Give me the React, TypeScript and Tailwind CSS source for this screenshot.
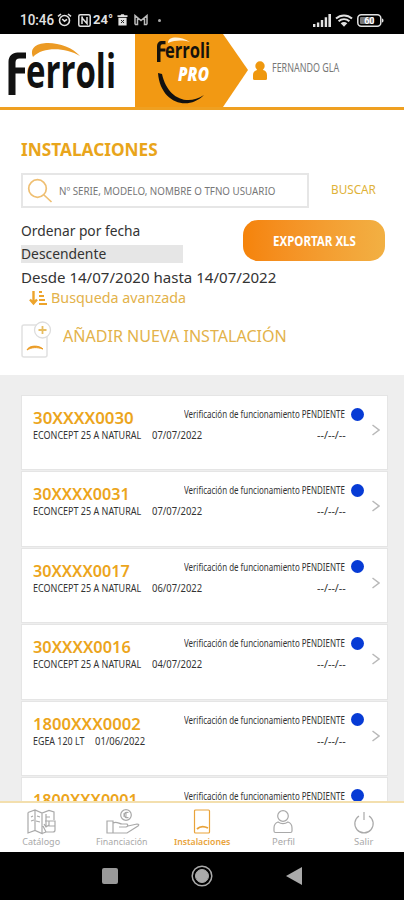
import { useLayoutEffect, useRef, useState, type ReactNode } from "react";
import { clsx } from "clsx";

// Condensed label: squeezes its text to the width of the box
const Fit = ({ className, children }: { className: string; children: ReactNode }) => {
  const box = useRef<HTMLSpanElement>(null);
  const text = useRef<HTMLSpanElement>(null);
  const [scale, setScale] = useState(1);

  useLayoutEffect(() => {
    if (box.current && text.current) {
      setScale(box.current.offsetWidth / text.current.offsetWidth);
    }
  }, [children]);

  return (
    <span ref={box} className={clsx("block shrink-0 whitespace-nowrap", className)}>
      <span ref={text} className="inline-block origin-left" style={{ transform: `scaleX(${scale})` }}>
        {children}
      </span>
    </span>
  );
};

type Installation = {
  id: string;
  idWidth: string;
  model?: string;
  modelWidth?: string;
  date?: string;
};

const installations: Installation[] = [
  { id: "30XXXX0030", idWidth: "w-[101px]", model: "ECONCEPT 25 A NATURAL", modelWidth: "w-[108px]", date: "07/07/2022" },
  { id: "30XXXX0031", idWidth: "w-[97px]", model: "ECONCEPT 25 A NATURAL", modelWidth: "w-[108px]", date: "07/07/2022" },
  { id: "30XXXX0017", idWidth: "w-[97px]", model: "ECONCEPT 25 A NATURAL", modelWidth: "w-[108px]", date: "06/07/2022" },
  { id: "30XXXX0016", idWidth: "w-[98px]", model: "ECONCEPT 25 A NATURAL", modelWidth: "w-[108px]", date: "04/07/2022" },
  { id: "1800XXX0002", idWidth: "w-[108px]", model: "EGEA 120 LT", modelWidth: "w-[51px]", date: "01/06/2022" },
  { id: "1800XXX0001", idWidth: "w-[105px]" },
];

const StatusBar = () => (
  <div className="flex h-[34px] shrink-0 items-center bg-black pl-5 pr-[20px] pt-1.5 font-['Roboto',sans-serif] text-[#e2e2e2]">
    <Fit className="w-[34px] text-[15px] font-medium leading-4">10:46</Fit>
    <svg className="ml-[3px] shrink-0" width="15" height="14" viewBox="0 0 15 14" fill="none" stroke="currentColor" strokeWidth="1.6">
      <circle cx="7.5" cy="7.5" r="5" />
      <path d="M1 3.4 4 1M14 3.4 11 1M5.2 6l2.3 2.2L10 6.4" />
    </svg>
    <svg className="ml-[6px] shrink-0" width="13" height="13" viewBox="0 0 13 13" fill="none" stroke="currentColor" strokeWidth="1.5">
      <rect x=".8" y=".8" width="11.4" height="11.4" rx="1.5" />
      <path d="M4 10V4l5 5.5V3M4 3.2h1" />
    </svg>
    <Fit className="ml-[2px] w-[20px] text-[13px] font-bold leading-4">24°</Fit>
    <svg className="ml-[4px] shrink-0" width="11" height="12" viewBox="0 0 11 12">
      <path d="M.5 1.2h3L4.2.2h2.6l.7 1h3v1.7H.5zM1.4 3.7h8.2V11.5H1.4z" fill="currentColor" />
      <path d="m4 6 3 3M7 6 4 9" stroke="#222" />
    </svg>
    <svg className="ml-[6px] shrink-0" width="14" height="12" viewBox="0 0 14 12" fill="none" stroke="#bbb" strokeWidth="1.5">
      <path d="M1 10.5v-9l6 5 6-5v9M1 10.5h2.500v-6M13 10.500h-2.500v-6" />
    </svg>
    <span className="ml-[10px] size-[3px] shrink-0 rounded-full bg-[#aaa]" />
    <svg className="ml-auto shrink-0" width="18" height="13" viewBox="0 0 18 13" fill="currentColor">
      <path d="M0 10h2.4v3H0zM3.9 8.5h2.4V13H3.9zM7.8 6h2.4v7H7.8zM11.7 3.3h2.4V13h-2.4zM15.4 0h2.6v13h-2.6z" />
    </svg>
    <svg className="ml-[4px] shrink-0" width="18" height="13" viewBox="0 0 18 13" fill="none" stroke="currentColor" strokeWidth="2">
      <path d="M1 4.600c4.700-4.300 11.300-4.300 16 0M3.600 7.300c3.200-2.900 7.600-2.900 10.800 0" />
      <path d="M5.700 9.300c2-1.700 4.600-1.700 6.600 0L9 12.800z" fill="currentColor" stroke="none" />
    </svg>
    <svg className="ml-[4px] shrink-0" width="27" height="13" viewBox="0 0 27 13">
      <rect x=".8" y=".8" width="23" height="11.4" rx="3.5" fill="none" stroke="currentColor" strokeWidth="1.5" />
      <rect x="3" y="3" width="14" height="7" rx="1" fill="#777" />
      <path d="M25 4.500c2 .5 2 3.500 0 4z" fill="currentColor" />
      <text x="12.3" y="9.8" textAnchor="middle" fontSize="9" fontWeight="700" fill="#fff">60</text>
    </svg>
  </div>
);

const Header = () => (
  <header className="flex h-[76px] shrink-0 border-b-[3px] border-[#efa021] bg-white">
    <svg className="shrink-0" width="248" height="73" viewBox="0 0 248 73" fontFamily="'Open Sans', sans-serif" fontWeight="700">
      <path d="M135 0h88l25 36-25 37h-88z" fill="#f29913" />
      <path d="M8.500 61V28c0-6 4-9.500 9-9.500h8.500v6h-6.500q-4 0-4 4v5h9.500v6h-9.500V61z" fill="#111" />
      <text x="26" y="53.5" fontSize="46" textLength="90" lengthAdjust="spacingAndGlyphs" fill="#111">erroli</text>
      <path d="M33 23C29 13 38 9 48 9c12 0 25 5 32 13C66 14 44 12 33 23z" fill="#ec9b25" />
      <path d="M157 28V12c0-3 2-5 4.500-5h4v3.200h-3q-2 0-2 2v2.300h5v3h-5V28z" fill="#15120c" />
      <text x="165" y="24" fontSize="22" textLength="45" lengthAdjust="spacingAndGlyphs" fill="#15120c">erroli</text>
      <path d="M168 9c0-7 12-7 22-1-8-2-14-2-22 1z" fill="#fff3dc" />
      <text x="178" y="47" fontSize="19" fontStyle="italic" fontWeight="800" textLength="31" lengthAdjust="spacingAndGlyphs" fill="#fff">PRO</text>
      <path d="M158 39c2 29 29 39 46 22-18 12-37 2-42-21z" fill="#111" />
    </svg>
    <div className="flex h-[68px] items-center pl-[5px]">
      <svg className="mt-[5px]" width="14" height="20" viewBox="0 0 14 20" fill="#ef980f">
        <circle cx="7" cy="5" r="4.7" />
        <path d="M0 17.500V14c0-3 2-4.500 4-5h6c2 .5 4 2 4 5v3.500q0 1.500-1.500 1.500h-11Q0 19 0 17.500z" />
      </svg>
      <Fit className="ml-[5px] w-[67px] text-[12px] text-[#777]">FERNANDO GLA</Fit>
    </div>
  </header>
);

const Filters = () => (
  <section className="h-[265px] shrink-0 pl-[21px] pr-[19px] pt-[29px] text-[#333]">
    <Fit className="w-[137px] text-[18px] font-bold leading-5 text-[#e9a51b]">INSTALACIONES</Fit>
    <div className="mt-[14px] flex items-center">
      <div className="flex h-[35px] w-[288px] items-center border-2 border-[#e6e6e6] pl-1">
        <svg width="26" height="26" viewBox="0 0 26 26" fill="none" stroke="#efbf72" strokeWidth="1.7">
          <circle cx="10.5" cy="10.5" r="8.8" />
          <path d="m17 17 7.500 7" />
        </svg>
        <Fit className="ml-[6px] w-[216px] text-[11px] leading-4 text-[#777]">Nº SERIE, MODELO, NOMBRE O TFNO USUARIO</Fit>
      </div>
      <Fit className="mb-[2px] ml-[22px] w-[45px] text-[12px] leading-4 text-[#dfb238]">BUSCAR</Fit>
    </div>
    <div className="flex h-[60px] justify-between">
      <div className="pt-[12px]">
        <Fit className="w-[119px] text-[14px] leading-[22px]">Ordenar por fecha</Fit>
        <div className="mt-[3px] h-[18px] w-[162px] bg-[#e6e6e6]">
          <Fit className="w-[85px] text-[14px] leading-[18px]">Descendente</Fit>
        </div>
      </div>
      <button className="mt-[12px] flex h-[41px] w-[142px] items-center justify-center rounded-[15px] bg-linear-to-r from-[#f58309] to-[#f2b043] text-[15px] font-bold text-white">
        <Fit className="w-[83px]">EXPORTAR XLS</Fit>
      </button>
    </div>
    <Fit className="w-[255px] text-[14px] leading-[20px]">Desde 14/07/2020 hasta 14/07/2022</Fit>
    <div className="flex h-[20px] items-center pl-[8px] text-[#e3b24a]">
      <svg width="19" height="16" viewBox="0 0 19 16" fill="none" stroke="#eda42b" strokeWidth="2">
        <path d="M4.500 1v12M1 9.500l3.500 4 3.500-4" strokeWidth="2.4" />
        <path d="M10 2h3M10 6h5M10 10h6M10 14h8" strokeWidth="1.8" />
      </svg>
      <Fit className="ml-[3px] w-[135px] text-[14px] leading-5">Busqueda avanzada</Fit>
    </div>
    <div className="mt-[13px] flex h-[38px] items-start">
      <svg className="shrink-0" width="31" height="38" viewBox="0 0 31 38" fill="none">
        <rect x="1" y="4" width="25" height="32" rx="2" stroke="#e1e1e1" strokeWidth="1.5" />
        <circle cx="21.5" cy="9" r="8" fill="#fff" stroke="#ddd" strokeWidth="1.3" />
        <path d="M17.500 9h8M21.500 5v8" stroke="#e7bd61" strokeWidth="1.8" />
        <path d="M6 29c2-5 12-5 16-1-6-2-11-2-16 1z" fill="#eb9a20" stroke="#eb9a20" />
      </svg>
      <Fit className="ml-[11px] mt-[3px] w-[224px] text-[16px] leading-6 text-[#e3b24a]">AÑADIR NUEVA INSTALACIÓN</Fit>
    </div>
  </section>
);

const InstallationCard = ({ item }: { item: Installation }) => (
  <li className="flex h-[73.4px] shrink-0 bg-white pl-[11px] pr-[7px] shadow-[0_0_0_1px_#e5e5e5]">
    <div className="flex-1 pt-[10px] text-[11.5px] text-[#333]">
      <div className="flex h-[23px] items-start justify-between">
        <Fit className={clsx("text-[16px] font-semibold leading-6 text-[#eca51c]", item.idWidth)}>{item.id}</Fit>
        <div className="flex h-4 items-center gap-[6px]">
          <Fit className="w-[161px] leading-4">Verificación de funcionamiento PENDIENTE</Fit>
          <span className="size-[13px] rounded-full bg-[#073bd5]" />
        </div>
      </div>
      {item.model && (
        <div className="flex gap-[11px] leading-3">
          <Fit className={clsx(item.modelWidth)}>{item.model}</Fit>
          <Fit className="w-[50px]">{item.date}</Fit>
          <Fit className="ml-auto mr-[18px] w-[29px]">--/--/--</Fit>
        </div>
      )}
    </div>
    <svg className="ml-[8px] mt-[28px] shrink-0" width="8" height="12" viewBox="0 0 8 12" fill="none" stroke="#b9b9b9" strokeWidth="1.5">
      <path d="m.5 1 6.500 5-6.500 5" />
    </svg>
  </li>
);

const tabs = [
  {
    label: "Catálogo",
    width: "w-[38px]",
    icon: <path d="M1 3.500 8 1l7 3 7-2.500 5 1.500v8M1 3.500V24l7-2.500 7 3v-21M8 1v20M15 24.500l4-1.500M4 8l2-1M4 12l3-1M10 7l3 1M9 12l4 1M19 5v13m-2-3 2 3 3-2M19 8h4M18 12h10v9q0 2-2 2h-7l-3-6M22 12v5h6" />,
  },
  {
    label: "Financiación",
    width: "w-[52px]",
    icon: (
      <>
        <circle cx="18" cy="6" r="5.3" />
        <path d="M20.500 3.500q-4-1-4 2.500t4 2.500M15 5h4M15 7h4M-1 12h6v12h-6zM5 14c4-2 6 1 9 1h5q2 2-1 3h-7M20 17l9-2q3 0 1 2l-11 7H5" />
      </>
    ),
  },
  {
    label: "Instalaciones",
    width: "w-[56px]",
    active: true,
    icon: (
      <>
        <rect x="6.500" y="1" width="15" height="23" rx="1" />
        <path d="M9 20c3-3 7-3 11-1" strokeWidth="1.8" />
      </>
    ),
  },
  {
    label: "Perfil",
    width: "w-[23px]",
    icon: (
      <>
        <circle cx="14" cy="7" r="5.3" />
        <path d="M9 13c-3 1-4 3-4 6v3q0 1.500 1.500 1.500h15Q23 23.500 23 22v-3c0-3-1-5-4-6-3 2-7 2-10 0z" />
      </>
    ),
  },
  {
    label: "Salir",
    width: "w-[19px]",
    icon: <path d="M9 7a9.200 9.200 0 1 0 10 0M14 3v8" />,
  },
];

const TabBar = () => (
  <nav className="flex h-[51px] shrink-0 border-t-2 border-[#f3dfae] bg-white pl-[1px]">
    {tabs.map((tab) => (
      <div
        key={tab.label}
        className={clsx("flex flex-1 flex-col items-center pt-[6px]", tab.active ? "font-semibold text-[#e9a33a]" : "text-[#a9a9a9]")}
      >
        <svg className="overflow-visible" width="28" height="26" viewBox="0 0 28 26" fill="none" stroke="currentColor" strokeWidth="1.2">
          {tab.icon}
        </svg>
        <Fit className={clsx("mt-px text-[9px] leading-3", tab.width)}>{tab.label}</Fit>
      </div>
    ))}
  </nav>
);

const SystemBar = () => (
  <div className="flex h-[48px] shrink-0 items-center justify-center gap-[73px] bg-black">
    <span className="size-4 rounded-[2px] bg-[#999]" />
    <svg width="22" height="22" viewBox="0 0 22 22" fill="none" stroke="#aaa">
      <circle cx="11" cy="11" r="9.8" strokeWidth="1.5" />
      <circle cx="11" cy="11" r="6.500" fill="#aaa" />
    </svg>
    <svg width="16" height="18" viewBox="0 0 16 18" fill="#aaa">
      <path d="M16 0v18L0 9z" />
    </svg>
  </div>
);

const App = () => {
  return (
    <div className="flex h-[900px] w-[404px] flex-col overflow-hidden bg-white font-['Noto_Sans',sans-serif]">
      <StatusBar />
      <Header />
      <Filters />
      <ul className="flex min-h-0 flex-1 flex-col gap-[3px] overflow-hidden bg-[#eee] pl-[22px] pr-[17px] pt-[21px]">
        {installations.map((item) => (
          <InstallationCard key={item.id} item={item} />
        ))}
      </ul>
      <TabBar />
      <SystemBar />
    </div>
  );
};

export default App;
